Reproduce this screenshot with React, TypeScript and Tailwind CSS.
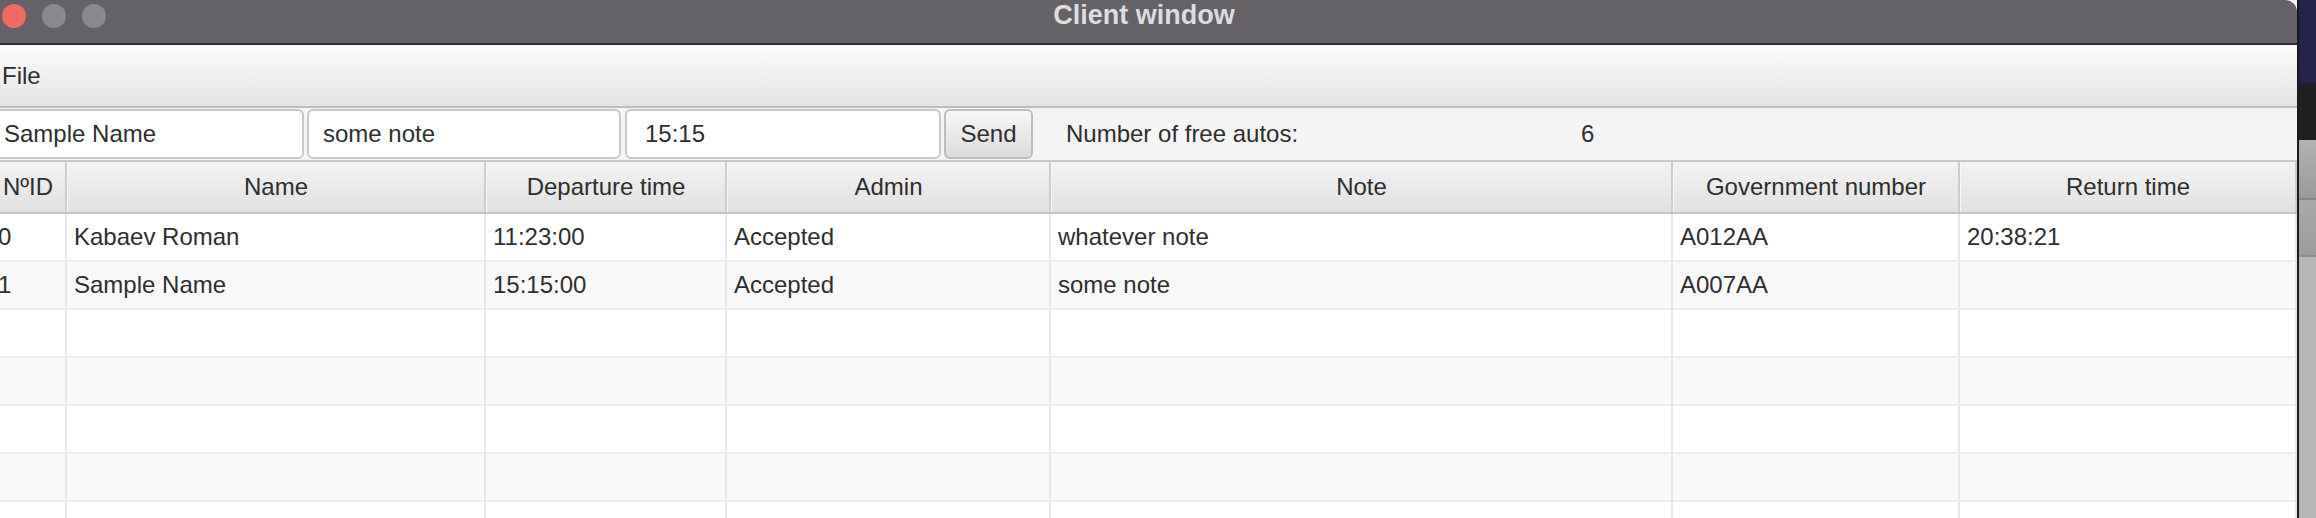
const rows = [
  ["0", "Kabaev Roman", "11:23:00", "Accepted", "whatever note", "A012AA", "20:38:21"],
  ["1", "Sample Name", "15:15:00", "Accepted", "some note", "A007AA", ""],
  ["", "", "", "", "", "", ""],
  ["", "", "", "", "", "", ""],
  ["", "", "", "", "", "", ""],
  ["", "", "", "", "", "", ""],
  ["", "", "", "", "", "", ""],
];

const headers = ["NºID", "Name", "Departure time", "Admin", "Note", "Government number", "Return time"];

function TitleBar() {
  return (
    <div className="grid grid-cols-[1fr_auto_1fr] items-center h-[45px] pb-[13px] bg-[#646266] rounded-tr-[12px] border-b-2 border-[#2c2b2d]">
      <div className="flex items-center gap-[16px] pl-[11px] pt-[1px]">
        <span className="w-[24px] h-[24px] rounded-full bg-[#ee6b5f]" />
        <span className="w-[24px] h-[24px] rounded-full bg-[#8b898d]" />
        <span className="w-[24px] h-[24px] rounded-full bg-[#8b898d]" />
      </div>
      <div className="text-[27px] font-bold text-[#dedcdf] leading-none">Client window</div>
      <div />
    </div>
  );
}

function Toolbar() {
  return (
    <div className="flex items-center h-[52px] bg-[#f4f4f4] text-[24px] text-[#2e2e2e]">
      <input
        readOnly
        value="Sample Name"
        className="w-[313px] h-[50px] px-[11px] bg-white border-2 border-[#c8c8c8] rounded-[6px] outline-none"
      />
      <input
        readOnly
        value="some note"
        className="w-[314px] h-[50px] ml-[3px] px-[14px] bg-white border-2 border-[#c8c8c8] rounded-[6px] outline-none"
      />
      <input
        readOnly
        value="15:15"
        className="w-[316px] h-[50px] ml-[4px] px-[18px] bg-white border-2 border-[#c8c8c8] rounded-[6px] outline-none"
      />
      <button className="w-[89px] h-[50px] ml-[3px] bg-gradient-to-b from-[#f7f7f7] to-[#dcdcdc] border-2 border-[#bdbdbd] rounded-[6px] text-[#2e2e2e]">
        Send
      </button>
      <span className="ml-[33px] w-[515px]">Number of free autos:</span>
      <span>6</span>
    </div>
  );
}

function Table() {
  return (
    <div className="flex-1 overflow-hidden border-t-2 border-[#c8c8c8] text-[24px] text-[#2e2e2e]">
      <div className="grid grid-cols-[76px_419px_241px_324px_622px_287px_1fr] h-[52px] border-b-2 border-[#c4c4c4] bg-gradient-to-b from-[#f3f3f3] to-[#e1e1e1]">
        {headers.map((h, i) => (
          <div
            key={h}
            className={
              i === 0
                ? "flex items-center justify-end pr-[12px] border-r-2 border-[#cdcdcd] border-l border-l-white"
                : "flex items-center justify-center border-r-2 border-[#cdcdcd] border-l border-l-[#f7f7f7]"
            }
          >
            {h}
          </div>
        ))}
      </div>
      {rows.map((r, ri) => (
        <div
          key={ri}
          className={
            ri % 2 === 0
              ? "grid grid-cols-[76px_419px_241px_324px_622px_287px_1fr] h-[48px] border-b-2 border-[#ececec] bg-white"
              : "grid grid-cols-[76px_419px_241px_324px_622px_287px_1fr] h-[48px] border-b-2 border-[#ececec] bg-[#f9f9f9]"
          }
        >
          {r.map((c, ci) => (
            <div key={ci} className="flex items-center pl-[7px] border-r-2 border-[#e8e8e8] whitespace-nowrap overflow-hidden">
              {c}
            </div>
          ))}
        </div>
      ))}
    </div>
  );
}

function Desktop() {
  return (
    <div className="w-[19px] h-full flex flex-col border-l-2 border-[#1a1a1a]">
      <div className="h-[83px] bg-[#23234b]" />
      <div className="h-[57px] bg-[#201f21]" />
      <div className="h-[60px] bg-gradient-to-b from-[#b3b3b3] to-[#9a9a9a] border-b-2 border-[#858585]" />
      <div className="h-[57px] bg-gradient-to-b from-[#a9a9a9] to-[#9c9c9c] border-b-2 border-[#8e8e8e]" />
      <div className="flex-1 bg-[#b6b6b6]" />
    </div>
  );
}

export default function App() {
  return (
    <div
      className="w-[2316px] h-[518px] flex overflow-hidden bg-[#b6b6b6]"
      style={{ fontFamily: '"Liberation Sans", Arial, sans-serif' }}
    >
      <div className="w-[2306px] shrink-0 -ml-[9px] h-full flex flex-col bg-[#f4f4f4]">
        <TitleBar />
        <div className="h-[63px] flex items-center pl-[11px] bg-gradient-to-b from-[#fbfbfb] to-[#e4e4e4] border-b-2 border-[#bcbcbc] text-[24px] text-[#2e2e2e]">
          File
        </div>
        <Toolbar />
        <Table />
      </div>
      <Desktop />
    </div>
  );
}
